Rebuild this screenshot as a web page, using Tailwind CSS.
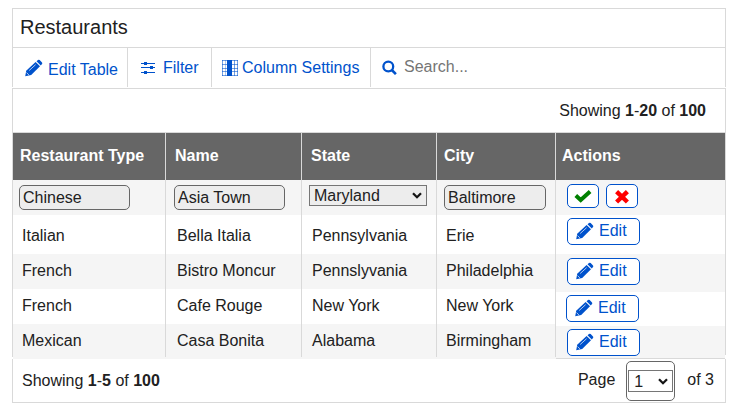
<!DOCTYPE html>
<html lang="en">
<head>
<meta charset="utf-8">
<title>Restaurants</title>
<script src="https://cdn.jsdelivr.net/npm/@tailwindcss/browser@4"></script>
</head>
<body class="bg-white text-[#212121] text-[16px] leading-[18px] font-['Liberation_Sans',Arial,sans-serif] w-[742px] h-[415px] overflow-hidden">
<svg class="hidden">
  <symbol id="pencil" viewBox="0 0 18 18">
    <path fill="#0052cc" d="M10.6 3 15 7.3 6.2 15.9 .2 17.2 1.2 11.8Z"/>
    <path fill="#0052cc" d="M11.5 2.2 13 1Q13.9.4 14.7 1.1L17 3.4Q17.7 4.2 17 5L15.8 6.4Z"/>
    <path stroke="#fff" stroke-width=".7" fill="none" d="M4.2 11.5 10.6 5.7M1.5 13.6 3.9 15.9"/>
  </symbol>
  <symbol id="arrow" viewBox="0 0 10 7">
    <path d="M1 1.3 5 5.2 9 1.3" fill="none" stroke="#151515" stroke-width="2.3"/>
  </symbol>
</svg>
<main class="ml-[12px] pt-[8px] w-[714px]">
  <section class="h-[79px] border-t border-x border-[#d9d9d9] mb-px">
    <h1 class="h-[38px] pl-[7px] pt-[7px] text-[20px] leading-[23px]">Restaurants</h1>
    <nav class="flex h-[40px] border-t border-[#d9d9d9] text-[#0052cc]">
      <a class="flex w-[115px] border-r border-[#d9d9d9] pl-[12px]"><svg class="w-[18px] h-[18px] mt-[11px]"><use href="#pencil"/></svg><span class="ml-[5px] mt-[13px] whitespace-nowrap">Edit Table</span></a>
      <a class="flex w-[84px] border-r border-[#d9d9d9] pl-[13px]">
        <svg class="w-[14px] h-[14px] mt-[13px]" viewBox="0 0 14 14"><path d="M0 2.5H14M0 6.5H14M0 11.5H14" stroke="#0052cc"/><path fill="#0052cc" d="M3 1h3v3H3zM9 5h3v3H9zM3 10h3v3H3z"/></svg>
        <span class="ml-[8px] mt-[11px]">Filter</span></a>
      <a class="flex w-[159px] border-r border-[#d9d9d9] pl-[10px]">
        <svg class="w-[16px] h-[16px] mt-[12px]" viewBox="0 0 16 16"><path d="M.5 0V16M12.5 0V16M15.5 0V16M0 .5H16M0 4.5H16M0 8.5H16M0 11.5H16M0 15.5H16" stroke="#0052cc" stroke-opacity=".55"/><path d="M3.5 0V16" stroke="#0052cc" stroke-opacity=".3"/><path fill="#0052cc" d="M5 0h5v16H5z"/></svg>
        <span class="ml-[4px] mt-[11px] whitespace-nowrap">Column Settings</span></a>
      <div class="flex pl-[11px]">
        <svg class="w-[15px] h-[15px] mt-[12px]" viewBox="0 0 15 15"><circle cx="6.3" cy="6.5" r="4.9" fill="none" stroke="#0052cc" stroke-width="2.3"/><path d="m9.8 10 4.1 4.1" stroke="#0052cc" stroke-width="2.6"/></svg>
        <span class="ml-[7px] mt-[10px] text-[#757575]">Search...</span></div>
    </nav>
  </section>

  <div class="h-[45px] border-t border-x border-[#d9d9d9] pt-[13px] pr-[19px] text-right border-b">Showing <b>1</b>-<b>20</b> of <b>100</b></div>

  <section class="flex h-[226px]">
    <div class="w-px h-[224px] bg-[#d9d9d9]"></div>
    <div class="w-[152px]">
      <div class="h-[47px] bg-[#666] text-white font-bold pl-[7px] pt-[14px]">Restaurant Type</div>
      <div class="h-[35px] bg-[#f5f5f5] pl-[6px] pt-[5px]"><div class="w-[111px] h-[25px] border border-[#666] rounded-[5px] bg-[#ededed] pl-[3px] pt-[3px]">Chinese</div></div>
      <div class="h-[39px] pl-[9px] pt-[12px]">Italian</div>
      <div class="h-[35px] bg-[#f5f5f5] pl-[9px] pt-[8px]">French</div>
      <div class="h-[35px] pl-[9px] pt-[8px]">French</div>
      <div class="h-[35px] bg-[#f5f5f5] pl-[9px] pt-[8px]">Mexican</div>
    </div>
    <div class="w-px bg-[#f5f5f5]"><div class="h-[224px] bg-[#d9d9d9]"></div></div>
    <div class="w-[135px]">
      <div class="h-[47px] bg-[#666] text-white font-bold pl-[9px] pt-[14px]">Name</div>
      <div class="h-[35px] bg-[#f5f5f5] pl-[8px] pt-[5px]"><div class="w-[111px] h-[25px] border border-[#666] rounded-[5px] bg-[#ededed] pl-[3px] pt-[3px]">Asia Town</div></div>
      <div class="h-[39px] pl-[11px] pt-[12px]">Bella Italia</div>
      <div class="h-[35px] bg-[#f5f5f5] pl-[11px] pt-[8px]">Bistro Moncur</div>
      <div class="h-[35px] pl-[11px] pt-[8px]">Cafe Rouge</div>
      <div class="h-[35px] bg-[#f5f5f5] pl-[11px] pt-[8px]">Casa Bonita</div>
    </div>
    <div class="w-px bg-[#f5f5f5]"><div class="h-[224px] bg-[#d9d9d9]"></div></div>
    <div class="w-[134px]">
      <div class="h-[47px] bg-[#666] text-white font-bold pl-[9px] pt-[14px]">State</div>
      <div class="h-[35px] bg-[#f5f5f5] pl-[7px] pt-[5px]"><div class="flex justify-between w-[118px] h-[21px] border border-[#767676] bg-[#ededed] pl-[4px] pr-[4px] pt-px">Maryland<svg class="w-[10px] h-[7px] mt-[5px]"><use href="#arrow"/></svg></div></div>
      <div class="h-[39px] pl-[10px] pt-[12px]">Pennsylvania</div>
      <div class="h-[35px] bg-[#f5f5f5] pl-[10px] pt-[8px]">Pennslyvania</div>
      <div class="h-[35px] pl-[10px] pt-[8px]">New York</div>
      <div class="h-[35px] bg-[#f5f5f5] pl-[10px] pt-[8px]">Alabama</div>
    </div>
    <div class="w-px bg-[#f5f5f5]"><div class="h-[224px] bg-[#d9d9d9]"></div></div>
    <div class="w-[118px]">
      <div class="h-[47px] bg-[#666] text-white font-bold pl-[7px] pt-[14px]">City</div>
      <div class="h-[35px] bg-[#f5f5f5] pl-[7px] pt-[5px]"><div class="w-[102px] h-[25px] border border-[#666] rounded-[5px] bg-[#ededed] pl-[3px] pt-[3px]">Baltimore</div></div>
      <div class="h-[39px] pl-[9px] pt-[12px]">Erie</div>
      <div class="h-[35px] bg-[#f5f5f5] pl-[9px] pt-[8px]">Philadelphia</div>
      <div class="h-[35px] pl-[9px] pt-[8px]">New York</div>
      <div class="h-[35px] bg-[#f5f5f5] pl-[9px] pt-[8px]">Birmingham</div>
    </div>
    <div class="w-px bg-[#f5f5f5]"><div class="h-[224px] bg-[#d9d9d9]"></div></div>
    <div class="w-[169px] text-[#0052cc]">
      <div class="h-[47px] bg-[#666] text-white font-bold pl-[6px] pt-[14px]">Actions</div>
      <div class="flex gap-[7px] h-[35px] bg-[#f5f5f5] pl-[11px] pt-[4px]">
        <div class="w-[32px] h-[24px] border border-[#0052cc] rounded-[5px] bg-white pl-[6px] pt-[5px]"><svg class="w-[18px] h-[13px]" viewBox="0 0 18 13"><path d="m1.8 5.6 4.9 4.4 9.4-8.4" fill="none" stroke="#008000" stroke-width="4"/></svg></div>
        <div class="w-[32px] h-[24px] border border-[#0052cc] rounded-[5px] bg-white pl-[8px] pt-[5px]"><svg class="w-[14px] h-[14px]" viewBox="0 0 14 14"><path d="m1.6 1.6 10.8 10.4M12.4 1.6 1.6 12" stroke="#f00" stroke-width="4.4"/></svg></div>
      </div>
      <div class="h-[39px] pl-[11px] pt-[3px]"><div class="flex w-[73px] h-[27px] border border-[#0052cc] rounded-[5px] bg-white pl-[8px]"><svg class="w-[18px] h-[18px] mt-[3px]"><use href="#pencil"/></svg><span class="ml-[5px] mt-[3px]">Edit</span></div></div>
      <div class="h-[38px] bg-[#f5f5f5] pl-[11px] pt-[4px]"><div class="flex w-[73px] h-[27px] border border-[#0052cc] rounded-[5px] bg-white pl-[8px]"><svg class="w-[18px] h-[18px] mt-[3px]"><use href="#pencil"/></svg><span class="ml-[5px] mt-[3px]">Edit</span></div></div>
      <div class="h-[34px] pl-[10px] pt-[3px]"><div class="flex w-[73px] h-[27px] border border-[#0052cc] rounded-[5px] bg-white pl-[8px]"><svg class="w-[18px] h-[18px] mt-[3px]"><use href="#pencil"/></svg><span class="ml-[5px] mt-[3px]">Edit</span></div></div>
      <div class="h-[32px] bg-[#f5f5f5] pl-[11px] pt-[3px]"><div class="flex w-[73px] h-[27px] border border-[#0052cc] rounded-[5px] bg-white pl-[8px]"><svg class="w-[18px] h-[18px] mt-[3px]"><use href="#pencil"/></svg><span class="ml-[5px] mt-[3px]">Edit</span></div></div>
      <div class="h-px bg-[#d9d9d9]"></div>
    </div>
    <div class="w-px h-[222px] bg-[#d9d9d9]"></div>
  </section>

  <footer class="flex h-[44px] border-x border-b border-[#d9d9d9] pl-[9px]">
    <span class="mt-[13px]">Showing <b>1</b>-<b>5</b> of <b>100</b></span>
    <span class="ml-auto mt-[12px]">Page</span>
    <div class="ml-[11px] mt-[2px] w-[49px] h-[40px] border border-[#666] rounded-[5px] px-px pt-[8px]"><div class="flex justify-between h-[22px] border border-[#767676] pl-[5px] pr-[4px] pt-[2px]">1<svg class="w-[10px] h-[7px] mt-[5px]"><use href="#arrow"/></svg></div></div>
    <span class="ml-[12px] mr-[11px] mt-[12px]">of 3</span>
  </footer>
</main>
</body>
</html>
